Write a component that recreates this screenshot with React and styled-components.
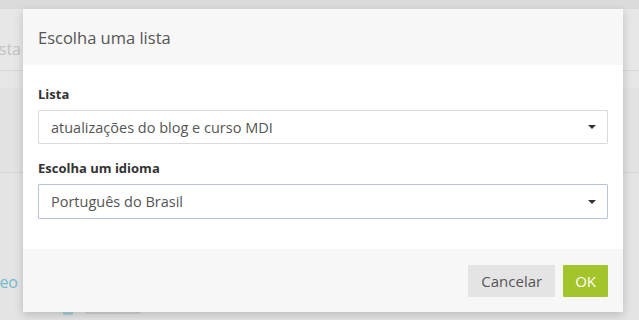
import styled, { createGlobalStyle } from "styled-components";

const Global = createGlobalStyle`
  html, body {
    margin: 0;
    padding: 0;
  }
  body {
    width: 639px;
    height: 320px;
    overflow: hidden;
    background: #e2e2e2;
    font-family: "Open Sans", "Noto Sans", sans-serif;
  }
`;

const Page = styled.div`
  position: relative;
  width: 639px;
  height: 320px;
  overflow: hidden;
  background: #e3e3e3;
`;

const TopStrip = styled.div`
  height: 9px;
  background: #dbdbdb;
`;

const Band = styled.div`
  display: flex;
  flex-direction: column;
  height: ${(p) => p.h}px;
  background: ${(p) => p.bg};
  border-bottom: ${(p) => (p.line ? `1px solid ${p.line}` : "none")};
  box-sizing: border-box;
`;

const Peek = styled.div`
  width: ${(p) => p.w}px;
  overflow: hidden;
  display: flex;
  justify-content: flex-end;
  white-space: nowrap;
  font-size: 16px;
  line-height: 22px;
  color: ${(p) => p.color};
  margin-top: ${(p) => p.top || 0}px;
`;

const ListRow = styled.div`
  display: flex;
  align-items: center;
  gap: 12px;
  margin-left: 63px;
  height: 8px;
`;

const List = styled.div`
  margin-top: 7px;
`;

const Bullet = styled.span`
  width: 10px;
  height: 5px;
  border-radius: 1px;
  background: #a9d3df;
`;

const Blur = styled.span`
  width: 56px;
  height: 4px;
  border-radius: 2px;
  background: #d2d2d2;
`;

const Modal = styled.div`
  position: absolute;
  left: 23px;
  top: 9px;
  width: 600px;
  background: #fff;
  box-shadow: 0 3px 9px rgba(0, 0, 0, 0.18);
  display: flex;
  flex-direction: column;
`;

const Header = styled.div`
  height: 56px;
  padding: 0 15px;
  display: flex;
  align-items: center;
  background: #f7f7f7;
`;

const Title = styled.h4`
  margin: 0;
  font-size: 16.5px;
  font-weight: 400;
  color: #555;
`;

const Body = styled.div`
  padding: 20px 15px 30px;
  display: flex;
  flex-direction: column;
  gap: 15px;
`;

const Group = styled.div`
  display: flex;
  flex-direction: column;
  gap: 7px;
`;

const Label = styled.label`
  font-size: 13px;
  line-height: 18px;
  font-weight: 700;
  color: #333;
`;

const Select = styled.div`
  height: ${(p) => (p.focused ? 35 : 34)}px;
  box-sizing: border-box;
  border: 1px solid ${(p) => (p.focused ? "#b7c2dd" : "#dadada")};
  border-radius: 1px;
  padding: 0 12px;
  display: flex;
  align-items: center;
  justify-content: space-between;
  font-size: 14.5px;
  color: #555;
  background: #fff;
`;

const Caret = styled.span`
  width: 0;
  height: 0;
  border-left: 4px solid transparent;
  border-right: 4px solid transparent;
  border-top: 4px solid #333;
  margin-right: -1px;
`;

const Footer = styled.div`
  height: 63px;
  padding: 0 15px;
  box-sizing: border-box;
  display: flex;
  align-items: center;
  justify-content: flex-end;
  gap: 8px;
  background: #f7f7f7;
`;

const Button = styled.button`
  height: 32px;
  border: none;
  border-radius: 1px;
  padding: 0 ${(p) => (p.primary ? 12 : 13)}px;
  font-family: inherit;
  font-size: 15px;
  color: ${(p) => (p.primary ? "#fff" : "#555")};
  background: ${(p) => (p.primary ? "#a3c42b" : "#e4e4e4")};
  cursor: pointer;
`;

export default function App() {
  return (
    <Page>
      <Global />
      <TopStrip />
      <Band h={62} bg="#e7e7e7" line="#d7d7d7">
        <Peek w={21} color="#c2c2c2" top={29}>
          Lista
        </Peek>
      </Band>
      <Band h={17} bg="#e6e6e6" />
      <Band h={85} bg="#e2e2e2" line="#d6d6d6" />
      <Band h={147} bg="#e4e4e4">
        <Peek w={18} color="#72bccb" top={98}>
          Vídeo
        </Peek>
        <List>
          <ListRow>
            <Bullet />
            <Blur />
          </ListRow>
          <ListRow>
            <Bullet />
            <Blur />
          </ListRow>
        </List>
      </Band>

      <Modal>
        <Header>
          <Title>Escolha uma lista</Title>
        </Header>
        <Body>
          <Group>
            <Label>Lista</Label>
            <Select>
              atualizações do blog e curso MDI
              <Caret />
            </Select>
          </Group>
          <Group>
            <Label>Escolha um idioma</Label>
            <Select focused>
              Português do Brasil
              <Caret />
            </Select>
          </Group>
        </Body>
        <Footer>
          <Button>Cancelar</Button>
          <Button primary>OK</Button>
        </Footer>
      </Modal>
    </Page>
  );
}
